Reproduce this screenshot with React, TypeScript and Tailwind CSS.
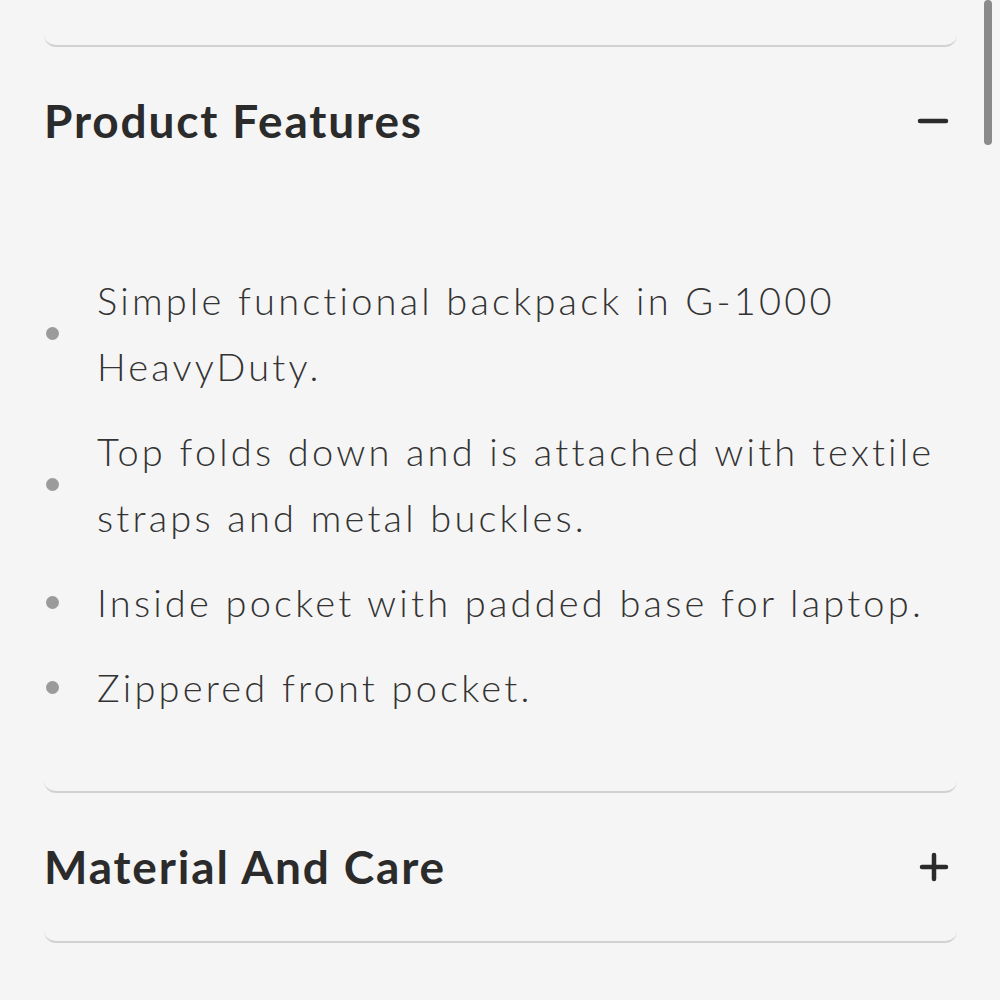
import { useState } from "react";

type Section = {
  title: string;
  items?: string[];
};

const sections: Section[] = [
  {
    title: "Product Features",
    items: [
      "Simple functional backpack in G-1000 HeavyDuty.",
      "Top folds down and is attached with textile straps and metal buckles.",
      "Inside pocket with padded base for laptop.",
      "Zippered front pocket.",
    ],
  },
  { title: "Material And Care" },
  { title: "Technical Details" },
];

function MinusIcon() {
  return (
    <svg width="32" height="8" viewBox="0 0 32 8" fill="none">
      <line x1="3" y1="4" x2="29" y2="4" stroke="#2b2b2b" strokeWidth="4.5" strokeLinecap="round" />
    </svg>
  );
}

function PlusIcon() {
  return (
    <svg width="30" height="30" viewBox="0 0 30 30" fill="none">
      <line x1="3" y1="15" x2="27" y2="15" stroke="#2b2b2b" strokeWidth="4.5" strokeLinecap="round" />
      <line x1="15" y1="3" x2="15" y2="27" stroke="#2b2b2b" strokeWidth="4.5" strokeLinecap="round" />
    </svg>
  );
}

function AccordionItem({ section, open, onToggle }: { section: Section; open: boolean; onToggle: () => void }) {
  return (
    <div className="border-b-2 border-[#d2d2d2] rounded-b-[12px]">
      <button
        onClick={onToggle}
        className="w-full h-[148px] flex items-center justify-between text-left"
      >
        <span className="text-[46px] font-bold tracking-[0.04em] text-[#2b2b2b] leading-none">
          {section.title}
        </span>
        <span className="mr-[8px] flex items-center">{open ? <MinusIcon /> : <PlusIcon />}</span>
      </button>
      {open && section.items && (
        <ul className="pt-[72px] pb-[71px] flex flex-col gap-[19px]">
          {section.items.map((item) => (
            <li key={item} className="flex items-center">
              <span className="ml-[2px] w-[13px] h-[13px] rounded-full bg-[#9b9b9b] shrink-0" />
              <span className="ml-[38px] text-[38px] leading-[66px] font-light tracking-[0.084em] text-[#333333]">
                {item}
              </span>
            </li>
          ))}
        </ul>
      )}
    </div>
  );
}

export default function App() {
  const [openIndex, setOpenIndex] = useState<number | null>(0);

  return (
    <div className="relative h-[1000px] overflow-hidden bg-[#f5f5f5] font-['Lato',sans-serif]">
      <div className="px-[44px] pr-[43px]">
        <div className="h-[47px] border-b-2 border-[#d2d2d2] rounded-b-[12px]" />
        {sections.map((s, i) => (
          <AccordionItem
            key={s.title}
            section={s}
            open={openIndex === i}
            onToggle={() => setOpenIndex(openIndex === i ? null : i)}
          />
        ))}
      </div>
      {/* scroll indicator */}
      <div className="absolute right-[8px] top-0 w-[8px] h-[145px] rounded-full bg-[#8a8a8a]" />
    </div>
  );
}
